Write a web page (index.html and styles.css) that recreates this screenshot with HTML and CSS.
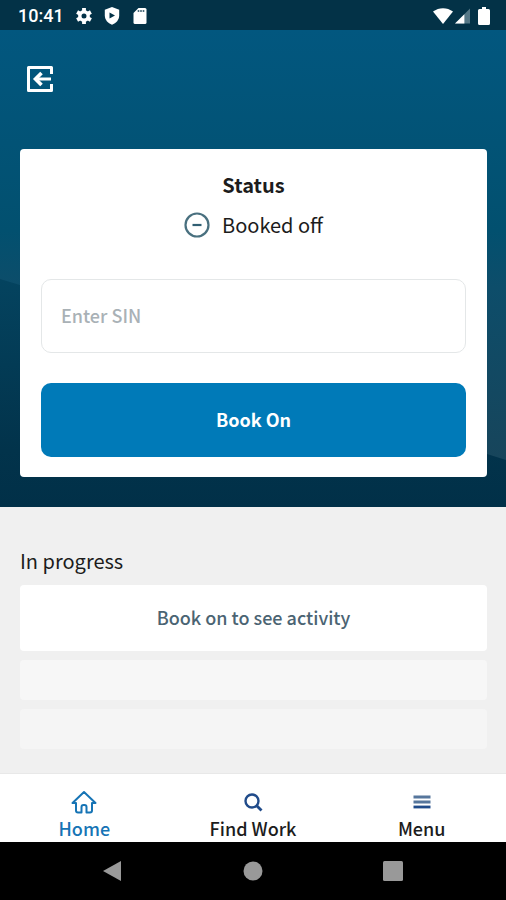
FILE: index.html
```html
<!DOCTYPE html>
<html lang="en">
<head>
<meta charset="utf-8">
<meta name="viewport" content="width=device-width, initial-scale=1">
<title>Status</title>
<link rel="stylesheet" href="styles.css">
</head>
<body>
<div class="screen">
  <header class="statusbar">
    <div class="statusbar-group">
      <span class="clock">10:41</span>
      <svg class="sys-icon" viewBox="0 0 16 16" aria-hidden="true"><circle cx="8" cy="8" r="4.200" fill="none" stroke="#fff" stroke-width="3.400"/><path d="M8 0v3M8 13v3M1.100 4l2.600 1.500M12.300 10.500l2.600 1.500M1.100 12l2.600-1.500M12.300 5.500l2.600-1.500" stroke="#fff" stroke-width="3.800"/></svg>
      <svg class="sys-icon" viewBox="0 0 16 18" aria-hidden="true"><path d="M8 0l7.200 2.800v5.400c0 4.500-3 8-7.200 9.500-4.200-1.500-7.200-5-7.200-9.500V2.800z" fill="#fff"/><path d="M5.500 5.500l5.500 3-5.500 3z" fill="#033247"/></svg>
      <svg class="sys-icon" viewBox="0 0 16 18" aria-hidden="true"><path d="M6.500 1H13a1.500 1.500 0 0 1 1.500 1.500v13A1.500 1.500 0 0 1 13 17H3a1.500 1.500 0 0 1-1.500-1.500V6z" fill="#fff"/><path d="M6.500 3v2M9 3v2M11.500 3v2" stroke="#4b6b7a" stroke-width="1.600"/></svg>
    </div>
    <div class="statusbar-group signals">
      <svg class="wifi" viewBox="0 0 20 16" aria-hidden="true"><path d="M0 3.500C6-1 14-1 20 3.500L10 16z" fill="#fff"/></svg>
      <svg class="cell" viewBox="0 0 16 16" aria-hidden="true"><path d="M16 0v16H0z" fill="#557887"/><path d="M10 6v10H0z" fill="#fff"/></svg>
      <svg class="battery" viewBox="0 0 12 18" aria-hidden="true"><path d="M4 0h4v2h2.500Q12 2 12 3.500v13Q12 18 10.500 18h-9Q0 18 0 16.500v-13Q0 2 1.500 2H4z" fill="#fff"/></svg>
    </div>
  </header>

  <section class="hero">
    <svg class="hills" viewBox="0 0 506 477" preserveAspectRatio="none" aria-hidden="true">
      <defs>
        <linearGradient id="sky" x1="0" y1="0" x2="0" y2="1"><stop offset="0" stop-color="#02577f"/><stop offset=".42" stop-color="#02506f"/><stop offset=".54" stop-color="#0d4d6a"/><stop offset=".9" stop-color="#17455b"/></linearGradient>
        <linearGradient id="hill" gradientUnits="userSpaceOnUse" x1="0" y1="250" x2="0" y2="477"><stop offset="0" stop-color="#04435f"/><stop offset=".75" stop-color="#02334b"/><stop offset="1" stop-color="#013048"/></linearGradient>
      </defs>
      <path d="M0 0h506v477H0z" fill="url(#sky)"/>
      <path d="M0 249l20 6 380 166h70l17 3 19 6v47H0z" fill="url(#hill)"/>
    </svg>
    <button class="logout" type="button" aria-label="Log out">
      <svg viewBox="0 0 26 26" aria-hidden="true"><path d="M24.500 8V1.500h-23v23h23V18" fill="none" stroke="#fff" stroke-width="3" stroke-linejoin="round"/><path d="M24 13H9" stroke="#fff" stroke-width="3"/><path d="M14.500 7L8.500 13l6 6" fill="none" stroke="#fff" stroke-width="3.600"/></svg>
    </button>
    <form class="card">
      <h1 class="card-title">Status</h1>
      <p class="state">
        <svg viewBox="0 0 26 26" aria-hidden="true"><circle cx="13" cy="13" r="11.500" fill="none" stroke="#49707f" stroke-width="2.200"/><path d="M8.500 13h9" stroke="#315f73" stroke-width="2.200"/></svg>
        <span>Booked off</span>
      </p>
      <input class="sin" type="text" placeholder="Enter SIN" aria-label="Enter SIN">
      <button class="book" type="button">Book On</button>
    </form>
  </section>

  <main class="progress">
    <h2 class="progress-title">In progress</h2>
    <p class="notice">Book on to see activity</p>
    <div class="ghost"></div>
    <div class="ghost faint"></div>
  </main>

  <nav class="tabs">
    <a class="tab active" href="#home">
      <svg viewBox="0 0 26 24" aria-hidden="true"><path d="M13 2L1.500 13H5v7.500q0 2 2 2h3.500V17q0-2 2-2h1q2 0 2 2v5.500H19q2 0 2-2V13h3.500z" fill="none" stroke="#1674b5" stroke-width="2" stroke-linejoin="round"/></svg>
      <span>Home</span>
    </a>
    <a class="tab" href="#work">
      <svg viewBox="0 0 26 24" aria-hidden="true"><circle cx="12" cy="11" r="6.500" fill="none" stroke="#204b8a" stroke-width="2.400"/><path d="M16.500 15.500l5 5" stroke="#204b8a" stroke-width="2.800"/></svg>
      <span>Find Work</span>
    </a>
    <a class="tab" href="#menu">
      <svg viewBox="0 0 26 24" aria-hidden="true"><path d="M4.500 7h17M4.500 12h17" stroke="#56769c" stroke-width="2.800"/><path d="M4.500 17h17" stroke="#204b8a" stroke-width="2.800"/></svg>
      <span>Menu</span>
    </a>
  </nav>

  <footer class="system">
    <button type="button" aria-label="Back"><svg viewBox="0 0 20 20" aria-hidden="true"><path d="M0 10L18 0v20z" fill="#999"/></svg></button>
    <button type="button" aria-label="Home screen"><svg viewBox="0 0 20 20" aria-hidden="true"><circle cx="10" cy="10" r="9.500" fill="#999"/></svg></button>
    <button type="button" aria-label="Recent apps"><svg viewBox="0 0 20 20" aria-hidden="true"><rect width="20" height="20" rx="1.500" fill="#999"/></svg></button>
  </footer>
</div>
</body>
</html>
```
FILE: styles.css
```css
* {
  box-sizing: border-box;
}

body {
  margin: 0;
  background: #f0f0f0;
  color: #1c1c1c;
  font-family: "Noto Sans CJK SC", "Noto Sans", sans-serif;
}

h1, h2, p {
  margin: 0;
}

button {
  border: 0;
  padding: 0;
  background: none;
  font: inherit;
}

svg {
  display: block;
}

.screen {
  min-height: 100vh;
  display: flex;
  flex-direction: column;
}

.statusbar {
  height: 30px;
  padding: 1px 16px 0 18px;
  display: flex;
  align-items: center;
  justify-content: space-between;
  background: #033247;
}

.statusbar-group {
  display: flex;
  align-items: center;
  gap: 12px;
}

.clock {
  color: #fff;
  font: 500 18px/28px Roboto, sans-serif;
}

.sys-icon {
  width: 16px;
  height: 18px;
}

.signals {
  gap: 2px;
}

.wifi {
  width: 20px;
  height: 16px;
}

.cell {
  width: 15px;
  height: 16px;
}

.battery {
  width: 12px;
  height: 18px;
  margin-left: 6px;
}

.hero {
  position: relative;
  padding: 36px 19px 30px 20px;
}

.hills {
  position: absolute;
  inset: 0;
  width: 100%;
  height: 100%;
}

.logout {
  position: relative;
  display: block;
  margin: 0 0 57px 7px;
}

.logout svg {
  width: 26px;
  height: 26px;
}

.card {
  position: relative;
  display: flex;
  flex-direction: column;
  padding: 20px 21px;
  border-radius: 4px;
  background: #fff;
}

.card-title {
  font-size: 20px;
  line-height: 32px;
  text-align: center;
}

.state {
  display: flex;
  align-items: center;
  justify-content: center;
  gap: 12px;
  margin: 8px 0 38px;
  font-size: 20px;
  line-height: 32px;
}

.state svg {
  width: 26px;
  height: 26px;
}

.sin,
.book {
  width: 100%;
  height: 74px;
  border-radius: 10px;
}

.sin {
  margin-bottom: 30px;
  padding: 0 19px 2px;
  border: 1px solid #e4e7e8;
  background: #fff;
  font: 500 18px/28px "Noto Sans CJK SC", "Noto Sans", sans-serif;
}

.sin::placeholder {
  color: #a9b1b6;
  opacity: 1;
}

.book {
  padding-bottom: 2px;
  background: #007ab8;
  color: #fff;
  font-size: 18px;
  font-weight: 700;
}

.progress {
  flex: 1;
  display: flex;
  flex-direction: column;
  padding: 38px 19px 24px 20px;
}

.progress-title {
  margin-bottom: 8px;
  font-size: 20px;
  font-weight: 400;
  line-height: 32px;
}

.notice {
  padding: 17px 18px 19px;
  border-radius: 4px;
  background: #fff;
  color: #4b6473;
  font-size: 18px;
  font-weight: 500;
  line-height: 30px;
  text-align: center;
}

.ghost {
  height: 40px;
  margin-top: 9px;
  border-radius: 4px;
  background: #f7f7f7;
}

.faint {
  background: #f5f5f5;
}

.tabs {
  display: grid;
  grid-template-columns: repeat(3, 1fr);
  height: 69px;
  padding-top: 16px;
  border-top: 1px solid #e8e8e8;
  background: #fff;
}

.tab {
  display: flex;
  flex-direction: column;
  align-items: center;
  color: #1c1c1c;
  font-size: 18px;
  font-weight: 500;
  line-height: 28px;
  text-decoration: none;
}

.tab svg {
  width: 26px;
  height: 24px;
}

.active {
  color: #1674b5;
}

.system {
  display: flex;
  align-items: center;
  justify-content: center;
  gap: 120px;
  height: 58px;
  background: #000;
}

.system svg {
  width: 20px;
  height: 20px;
}
```
